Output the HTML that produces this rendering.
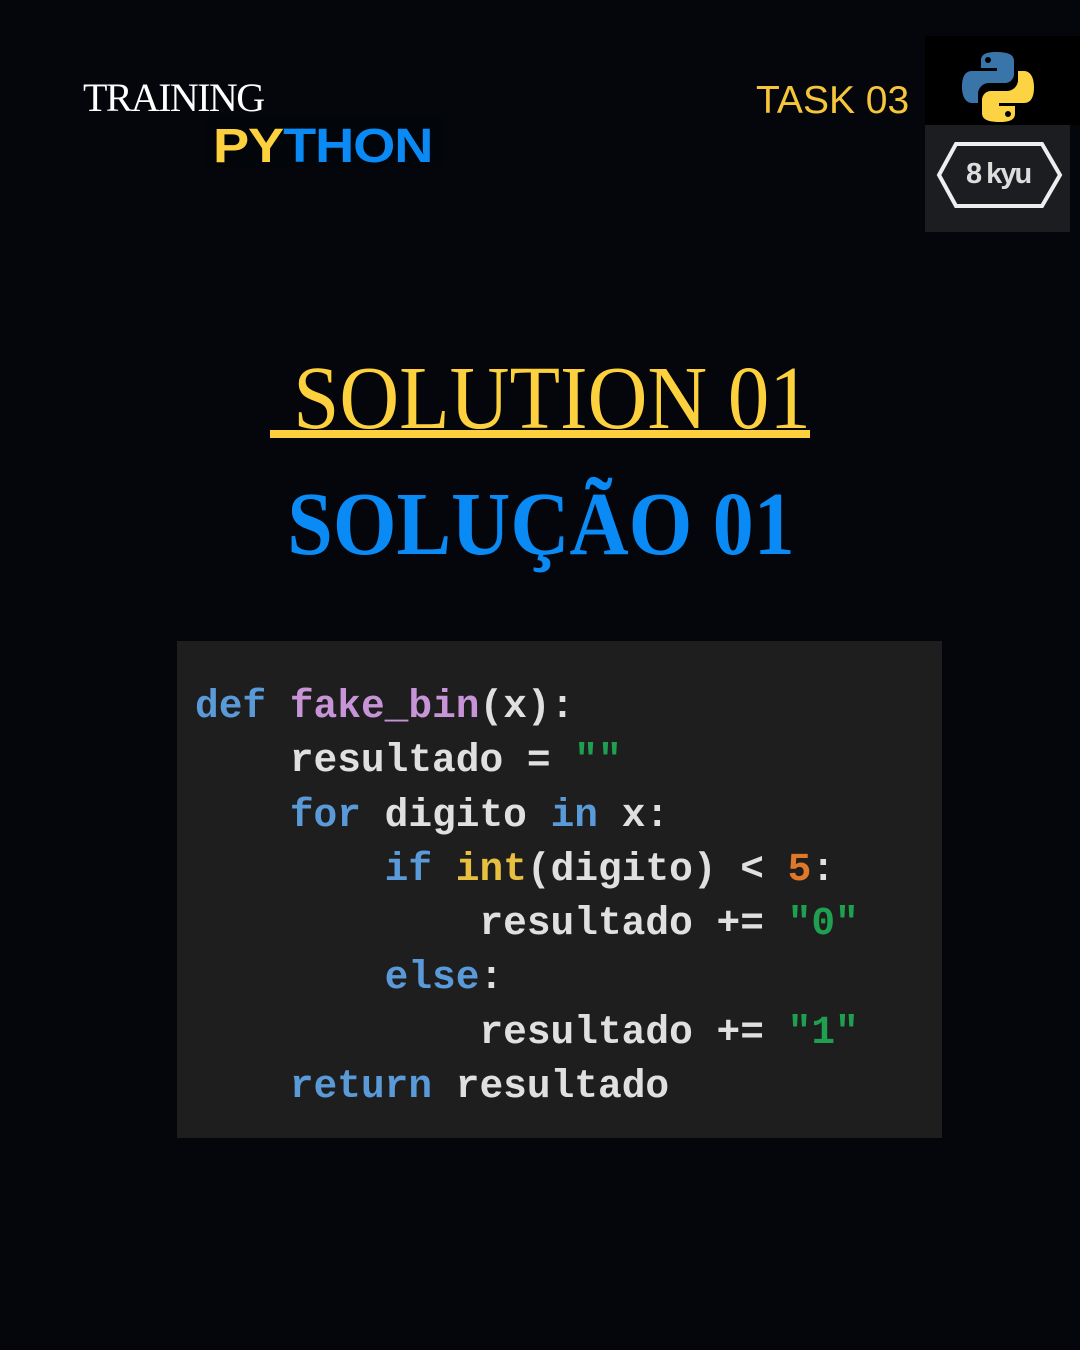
<!DOCTYPE html>
<html><head><meta charset="utf-8"><style>
body{margin:0;background:#05060b;width:1080px;height:1350px;position:relative;overflow:hidden;font-family:"Liberation Sans",sans-serif}
.a{position:absolute;white-space:nowrap}
.code{position:absolute;left:177px;top:641px;width:765px;height:497px;background:#1e1e1e}
.k{color:#5a9ad8}.f{color:#c794d8}.s{color:#1fa050}.n{color:#e0782a}.y{color:#e8c040}
</style></head><body>
<div class="a" style="left:83px;top:74px;font-family:'Liberation Serif',serif;font-size:40px;color:#fff;letter-spacing:-1.6px">TRAINING</div>
<div class="a" style="left:206px;top:117px;width:236px;height:50px;background:#02050a"></div>
<div class="a" style="left:213px;top:119px;font-size:48px;font-weight:900;color:#0a8af5;letter-spacing:-1px;transform:scaleX(1.13);transform-origin:left"><span style="color:#fdd13e">PY</span>THON</div>
<div class="a" style="left:756px;top:79px;font-size:39px;color:#f5c53a">TASK 03</div>
<div class="a" style="left:925px;top:36px;width:155px;height:89px;background:#000"></div>
<svg class="a" style="left:960px;top:50px" width="76" height="74" viewBox="0 0 76 74">
<path d="M36 2c-14 0-15 5-15 9v7h16v3H12C5 21 2 27 2 37s4 16 10 16h6v-9c0-6 5-11 11-11h16c5 0 9-4 9-9V11C54 5 49 2 36 2z" fill="#3a75aa"/>
<circle cx="28" cy="10" r="3" fill="#000"/>
<path d="M40 72c14 0 15-5 15-9v-7H39v-3h25c7 0 10-6 10-16s-4-16-10-16h-6v9c0 6-5 11-11 11H31c-5 0-9 4-9 9v13c0 6 5 9 18 9z" fill="#fcd443"/>
<circle cx="48" cy="64" r="3" fill="#000"/>
</svg>
<div class="a" style="left:925px;top:125px;width:145px;height:107px;background:#1c1d21"></div>
<svg class="a" style="left:936px;top:141px" width="128" height="68"><path d="M20 3H106L124 34L106 65H20L3 34Z" fill="none" stroke="#eee" stroke-width="4"/></svg>
<div class="a" style="left:966px;top:158px;font-size:29px;font-weight:bold;color:#ddd;letter-spacing:-2px">8 kyu</div>
<div class="a" style="left:0;width:1080px;text-align:center;top:344px;font-family:'Liberation Serif',serif;font-size:90px;color:#fdd13e;line-height:110px;transform:translateX(12px) scaleX(0.92)">SOLUTION 01</div>
<div class="a" style="left:270px;top:430px;width:540px;height:8px;background:#fdd13e"></div>
<div class="a" style="left:0;width:1080px;text-align:center;top:470px;font-family:'Liberation Serif',serif;font-weight:bold;font-size:90px;color:#0a8af5;line-height:110px;transform:translateX(1px) scaleX(0.91)">SOLUÇÃO 01</div>
<div class="code"></div>
<pre class="a" style="white-space:pre;margin:0;left:195px;top:680px;font-family:'Liberation Mono',monospace;font-weight:bold;font-size:39.5px;line-height:54.3px;color:#e0e0e0"><span class="k">def</span> <span class="f">fake_bin</span>(x):
    resultado = <span class="s">""</span>
    <span class="k">for</span> digito <span class="k">in</span> x:
        <span class="k">if</span> <span class="y">int</span>(digito) &lt; <span class="n">5</span>:
            resultado += <span class="s">"0"</span>
        <span class="k">else</span>:
            resultado += <span class="s">"1"</span>
    <span class="k">return</span> resultado</pre>
</body></html>
